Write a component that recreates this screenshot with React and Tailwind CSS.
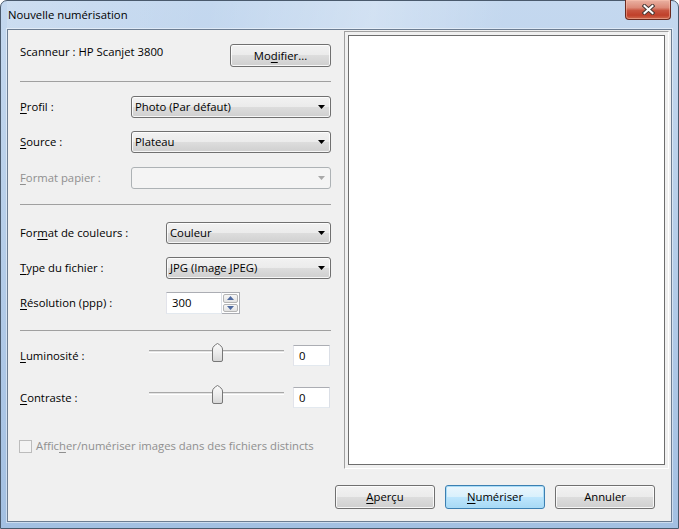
import React from "react";

// Win7-style button face
const face =
  "bg-[linear-gradient(180deg,#f2f2f2_0%,#ebebeb_50%,#dddddd_50%,#cfcfcf_100%)] shadow-[inset_0_0_0_1px_rgba(255,255,255,0.8)]";

function Key({ children }) {
  return <span className="underline underline-offset-[2px]">{children}</span>;
}

function Button({ children, className = "", primary = false }) {
  return (
    <div
      className={`h-[23px] flex items-center justify-center rounded-[3px] border leading-[16px] ${
        primary
          ? "border-[#3c7fb1] bg-[linear-gradient(180deg,#eaf6fd_0%,#d9f0fc_50%,#bee6fd_50%,#a7d9f5_100%)] shadow-[inset_0_0_0_1px_#a9dcf7]"
          : "border-[#707070] " + face
      } ${className}`}
    >
      {children}
    </div>
  );
}

function Combo({ children, className = "", disabled = false }) {
  return (
    <div
      className={`h-[22px] flex items-center rounded-[3px] border pl-[3px] pr-[5px] ${
        disabled ? "border-[#adb2b5] bg-[#f4f4f4]" : "border-[#707070] " + face
      } ${className}`}
    >
      <span className="flex-1 leading-[16px] whitespace-nowrap">{children}</span>
      <svg width="7" height="4" viewBox="0 0 7 4">
        <path d="M0 0h7L3.5 4z" fill={disabled ? "#a8a8a8" : "#000"} />
      </svg>
    </div>
  );
}

function Separator({ className = "" }) {
  return <div className={`h-px bg-[#a0a0a0] ${className}`} />;
}

function Field({ children, className = "" }) {
  return (
    <div
      className={`flex items-center bg-white border border-[#abadb3] border-l-[#e2e3ea] border-r-[#dbdfe6] border-b-[#e3e9ef] pl-[5px] leading-[16px] ${className}`}
    >
      {children}
    </div>
  );
}

function Thumb() {
  return (
    <svg width="11" height="19" viewBox="0 0 11 19" className="absolute left-[63px] top-0">
      <defs>
        <linearGradient id="thumbFill" x1="0" y1="0" x2="0" y2="1">
          <stop offset="0" stopColor="#fbfbfb" />
          <stop offset="0.5" stopColor="#ececec" />
          <stop offset="1" stopColor="#d6d6d6" />
        </linearGradient>
      </defs>
      <path
        d="M0.5 17V6C0.5 4 3 1.8 5.5 0.5C8 1.8 10.5 4 10.5 6V17Q10.5 18.5 9 18.5H2Q0.5 18.5 0.5 17Z"
        fill="url(#thumbFill)"
        stroke="#777"
      />
    </svg>
  );
}

function Slider() {
  return (
    <div className="relative w-[135px] h-[19px] pt-[7px]">
      <div className="h-[3px] border-t border-[#a8a8a8] bg-[#e4e4e4] border-b border-b-[#ffffff]" />
      <Thumb />
    </div>
  );
}

function SpinArrow({ up }) {
  return (
    <div className="flex-1 flex items-center justify-center rounded-[2px] border border-[#b4b4b4] bg-[linear-gradient(180deg,#f7f7f7,#e2e2e2)]">
      <svg width="7" height="4" viewBox="0 0 7 4">
        <path d={up ? "M0 4h7L3.5 0z" : "M0 0h7L3.5 4z"} fill="#4f6aa0" />
      </svg>
    </div>
  );
}

export default function App() {
  return (
    <div className="w-[679px] h-[529px] flex flex-col rounded-t-[7px] border border-[#4a5a6d] bg-[linear-gradient(180deg,#c4d8ef_0%,#b9d0ea_35%,#adc7e6_70%,#a3c0e2_100%)] px-[6px] pb-[6px] font-['Open_Sans','Liberation_Sans',sans-serif] text-[11.3px] text-black">
      {/* title bar */}
      <div className="h-[28px] flex items-start justify-between bg-[linear-gradient(100deg,rgba(255,255,255,0.15)_0%,rgba(255,255,255,0)_30%,rgba(255,255,255,0.25)_55%,rgba(255,255,255,0)_75%)]">
        <div className="pt-[6px] pl-[1px] leading-[16px] text-[#000]">Nouvelle numérisation</div>
        <div className="-mt-[1px] mr-px w-[46px] h-[20px] flex items-center justify-center rounded-b-[4px] border border-t-0 border-[#6b2a1f] bg-[linear-gradient(180deg,#eab2a3_0%,#dc8a78_40%,#c85540_55%,#c0402a_80%,#cf6a4f_100%)] shadow-[inset_0_0_0_1px_rgba(255,200,180,0.45)]">
          <svg width="13" height="11" viewBox="0 0 13 11">
            <path d="M2.5 2L10.5 9M10.5 2L2.5 9" stroke="#4a3a36" strokeWidth="4" strokeLinecap="square" />
            <path d="M2.5 2L10.5 9M10.5 2L2.5 9" stroke="#ffffff" strokeWidth="2" strokeLinecap="square" />
          </svg>
        </div>
      </div>

      {/* client area */}
      <div className="flex-1 flex flex-col border border-[#6c7d92] bg-[#f0f0f0] shadow-[0_0_0_1px_rgba(255,255,255,0.45)]">
        <div className="flex">
          {/* settings column */}
          <div className="w-[336px] pl-[12px] pr-[13px] flex flex-col">
            <div className="mt-[14px] h-[22px] flex items-start justify-between">
              <span className="leading-[16px]">Scanneur : HP Scanjet 3800</span>
              <Button className="w-[101px] h-[22px]">
                <span>
                  Mo<Key>d</Key>ifier...
                </span>
              </Button>
            </div>

            <Separator className="mt-[15px]" />

            <div className="mt-[14px] flex items-center">
              <span className="w-[111px] leading-[16px]">
                <Key>P</Key>rofil :
              </span>
              <Combo className="w-[200px]">Photo (Par défaut)</Combo>
            </div>
            <div className="mt-[13px] flex items-center">
              <span className="w-[111px] leading-[16px]">
                <Key>S</Key>ource :
              </span>
              <Combo className="w-[200px]">Plateau</Combo>
            </div>
            <div className="mt-[14px] flex items-center">
              <span className="w-[111px] leading-[16px] text-[#8f8f8f]">
                <Key>F</Key>ormat papier :
              </span>
              <Combo className="w-[200px]" disabled>
                {""}
              </Combo>
            </div>

            <Separator className="mt-[15px]" />

            <div className="mt-[17px] flex items-center">
              <span className="w-[146px] leading-[16px]">
                For<Key>m</Key>at de couleurs :
              </span>
              <Combo className="w-[165px]">Couleur</Combo>
            </div>
            <div className="mt-[13px] flex items-center">
              <span className="w-[146px] leading-[16px]">
                <Key>T</Key>ype du fichier :
              </span>
              <Combo className="w-[165px]">JPG (Image JPEG)</Combo>
            </div>
            <div className="mt-[13px] flex items-center">
              <span className="w-[146px] leading-[16px]">
                <Key>R</Key>ésolution (ppp) :
              </span>
              <Field className="w-[56px] h-[22px]">300</Field>
              <div className="w-[18px] h-[22px] flex flex-col gap-px p-px bg-white border border-[#abadb3] border-l-0">
                <SpinArrow up />
                <SpinArrow />
              </div>
            </div>

            <Separator className="mt-[16px]" />

            <div className="mt-[12px] h-[24px] flex items-start">
              <span className="w-[129px] mt-[5px] leading-[16px]">
                <Key>L</Key>uminosité :
              </span>
              <Slider />
              <Field className="ml-[9px] mt-[2px] w-[37px] h-[21px]">0</Field>
            </div>
            <div className="mt-[18px] h-[24px] flex items-start">
              <span className="w-[129px] mt-[5px] leading-[16px]">
                <Key>C</Key>ontraste :
              </span>
              <Slider />
              <Field className="ml-[9px] mt-[2px] w-[37px] h-[21px]">0</Field>
            </div>

            <div className="mt-[29px] flex items-start">
              <div className="-ml-px mt-[2px] w-[13px] h-[13px] border border-[#bcbcbc] bg-[#f4f4f4]" />
              <span className="ml-[4px] leading-[16px] text-[#8f8f8f] whitespace-nowrap">
                Affic<Key>h</Key>er/numériser images dans des fichiers distincts
              </span>
            </div>
          </div>

          {/* preview pane */}
          <div className="mt-px w-[325px] h-[438px] p-[3px] border border-[#a0a0a0] border-r-white border-b-white bg-[#f0f0f0]">
            <div className="w-full h-full border border-[#6d6d6d] bg-white" />
          </div>
        </div>

        {/* action buttons */}
        <div className="mt-[16px] pr-[16px] flex justify-end gap-[10px]">
          <Button className="w-[100px] h-[24px]">
            <span>
              <Key>A</Key>perçu
            </span>
          </Button>
          <Button className="w-[100px] h-[24px]" primary>
            <span>
              <Key>N</Key>umériser
            </span>
          </Button>
          <Button className="w-[100px] h-[24px]">
            <span>Annuler</span>
          </Button>
        </div>
      </div>
    </div>
  );
}
